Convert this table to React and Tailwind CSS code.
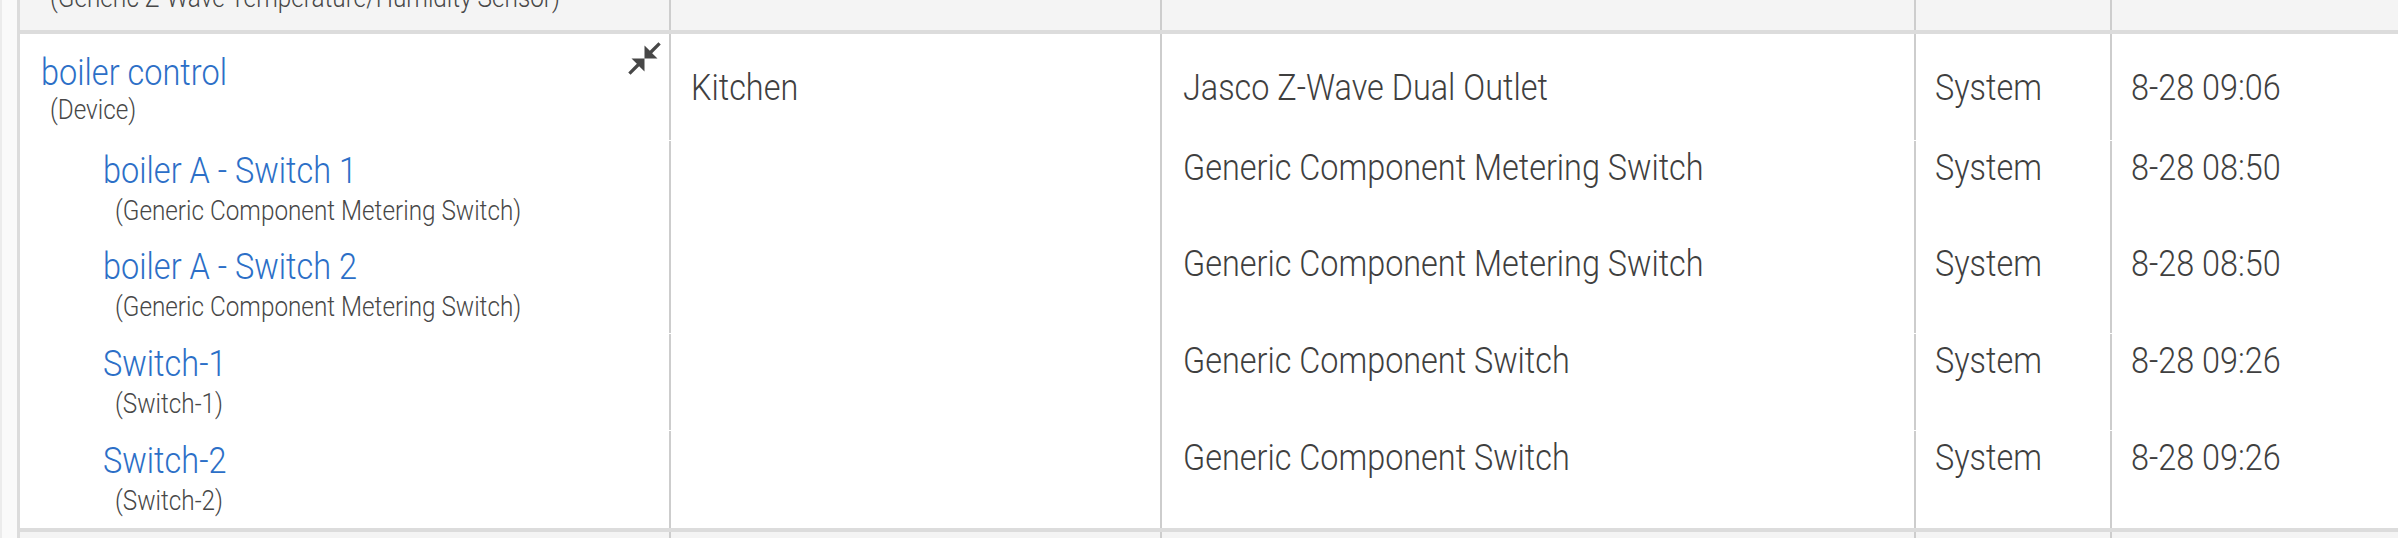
import React from "react";

const children = [
  { name: "boiler A - Switch 1", sub: "(Generic Component Metering Switch)", type: "Generic Component Metering Switch", time: "8-28 08:50" },
  { name: "boiler A - Switch 2", sub: "(Generic Component Metering Switch)", type: "Generic Component Metering Switch", time: "8-28 08:50" },
  { name: "Switch-1", sub: "(Switch-1)", type: "Generic Component Switch", time: "8-28 09:26" },
  { name: "Switch-2", sub: "(Switch-2)", type: "Generic Component Switch", time: "8-28 09:26" },
];

function CloseFullscreen() {
  return (
    <svg viewBox="0 0 24 24" width="39" height="39" fill="#474747">
      <path d="M22 3.41L16.71 8.7 20 12h-8V4l3.29 3.29L20.59 2 22 3.41zM3.41 22l5.29-5.29L12 20v-8H4l3.29 3.29L2 20.59 3.41 22z" />
    </svg>
  );
}

function T({ children }) {
  return <span className="inline-block scale-y-[1.16]">{children}</span>;
}

const cols = "grid grid-cols-[651px_491px_754px_196px_1fr]";
const vb = "border-r-2 border-[#cdcdcd]";
const main = "text-[32.4px] leading-[38px] font-light text-[#3f3f3f]";
const link = "text-[32.5px] leading-[38px] font-light text-[#2c6fc7]";
const sub = "text-[24.3px] leading-[30px] font-light text-[#474747]";

export default function App() {
  return (
    <div
      className="w-[2398px] h-[538px] overflow-hidden bg-[#fafafa] flex"
      style={{ fontFamily: "Roboto, 'Noto Sans', sans-serif" }}
    >
      <div className="w-[2px] bg-[#ececec]" />
      <div className="w-[15px]" />
      <div className="flex-1 border-l-[3px] border-[#dcdcdc] flex flex-col">
        {/* previous row (cut off) */}
        <div className={`${cols} h-[30px] bg-[#f4f4f4] overflow-hidden`}>
          <div className={`${vb} pl-[30px]`}>
            <div className={`mt-[-17px] ${sub}`}>
              <T>(Generic Z-Wave Temperature/Humidity Sensor)</T>
            </div>
          </div>
          <div className={vb} />
          <div className={vb} />
          <div className={vb} />
          <div />
        </div>
        <div className="h-[4px] bg-[#dcdcdc]" />
        {/* main row */}
        <div className={`${cols} h-[494px] bg-white`}>
          {/* device header */}
          <div className={`${vb} relative h-[106px] pt-[19px] pl-[21px]`}>
            <div className={link}><T>boiler control</T></div>
            <div className={`mt-[4px] pl-[9px] ${sub}`}><T>(Device)</T></div>
            <div className="absolute top-[5px] right-[5px]">
              <CloseFullscreen />
            </div>
          </div>
          <div className={`${vb} row-span-6 pt-[34px] pl-[20px] ${main}`}>
            <T>Kitchen</T>
          </div>
          <div className={`${vb} h-[106px] pt-[34px] pl-[21px] ${main}`}>
            <T>Jasco Z-Wave Dual Outlet</T>
          </div>
          <div className={`${vb} h-[106px] pt-[34px] pl-[19px] ${main}`}>
            <T>System</T>
          </div>
          <div className={`h-[106px] pt-[34px] pl-[19px] ${main}`}>
            <T>8-28 09:06</T>
          </div>
          {children.map((c) => (
            <React.Fragment key={c.name + c.time}>
              <div className={`${vb} h-[96px] pt-[10px] pl-[83px]`}>
                <div className={link}><T>{c.name}</T></div>
                <div className={`mt-[7px] pl-[12px] ${sub}`}><T>{c.sub}</T></div>
              </div>
              <div className={`${vb} h-[96px] pt-[7px] pl-[21px] ${main}`}>
                <T>{c.type}</T>
              </div>
              <div className={`${vb} h-[96px] pt-[7px] pl-[19px] ${main}`}>
                <T>System</T>
              </div>
              <div className={`h-[96px] pt-[7px] pl-[19px] ${main}`}>
                <T>{c.time}</T>
              </div>
            </React.Fragment>
          ))}
          <div className={vb} />
          <div className={vb} />
          <div className={vb} />
          <div />
        </div>
        <div className="h-[4px] bg-[#dcdcdc]" />
        <div className={`${cols} flex-1 bg-[#f4f4f4]`}>
          <div className={vb} />
          <div className={vb} />
          <div className={vb} />
          <div className={vb} />
          <div />
        </div>
      </div>
    </div>
  );
}
